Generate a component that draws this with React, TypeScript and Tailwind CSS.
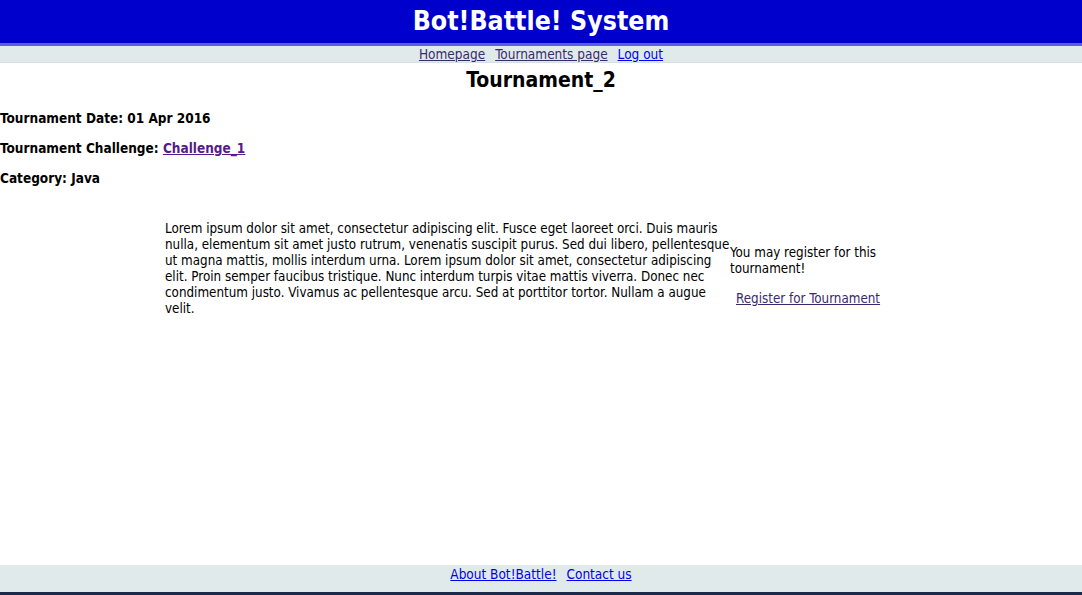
export default function App() {
  const font = { fontFamily: "'DejaVu Sans Condensed', 'DejaVu Sans', sans-serif" };

  return (
    <div className="flex flex-col min-h-[595px] bg-white text-black" style={font}>
      {/* Banner */}
      <header className="bg-[#0000cc] h-[46px] flex items-center justify-center border-b-[3px] border-[#5c5ce0]">
        <h1 className="text-white font-bold text-[26.5px] leading-none">Bot!Battle! System</h1>
      </header>

      {/* Top nav */}
      <nav className="bg-[#e0eaea] h-[17px] flex items-center justify-center gap-[10px] pt-[2px] text-[13.5px] leading-none border-b border-[#d4e2e2]">
        <a href="#" className="underline text-[#3b2a6b]">Homepage</a>
        <a href="#" className="underline text-[#3b2a6b]">Tournaments page</a>
        <a href="#" className="underline text-[#0000ee]">Log out</a>
      </nav>

      <main className="flex-1 flex flex-col">
        <h2 className="text-center font-bold text-[21px] leading-none mt-[7px]">Tournament_2</h2>

        <div className="flex flex-col gap-[16px] mt-[20px] text-[13.5px] font-bold leading-[14px]">
          <p>Tournament Date: 01 Apr 2016</p>
          <p>
            Tournament Challenge: <a href="#" className="underline text-[#551a8b]">Challenge_1</a>
          </p>
          <p>Category: Java</p>
        </div>

        <div className="flex items-center mt-[36px] ml-[165px] text-[13.3px] leading-[16px]">
          <p className="w-[565px] shrink-0">
            Lorem ipsum dolor sit amet, consectetur adipiscing elit. Fusce eget laoreet orci. Duis mauris nulla,
            elementum sit amet justo rutrum, venenatis suscipit purus. Sed dui libero, pellentesque ut magna mattis,
            mollis interdum urna. Lorem ipsum dolor sit amet, consectetur adipiscing elit. Proin semper faucibus
            tristique. Nunc interdum turpis vitae mattis viverra. Donec nec condimentum justo. Vivamus ac pellentesque
            arcu. Sed at porttitor tortor. Nullam a augue velit.
          </p>
          <div className="w-[165px] flex flex-col mt-[14px]">
            <p>You may register for this tournament!</p>
            <a href="#" className="underline text-[#3b2a6b] mt-[14px] ml-[6px]">Register for Tournament</a>
          </div>
        </div>
      </main>

      {/* Footer */}
      <footer className="bg-[#e0eaea] h-[30px] flex items-start justify-center gap-[10px] pt-[2px] text-[13.5px] leading-[14px] border-b-[3px] border-[#1b2a4a]">
        <a href="#" className="underline text-[#0000ee]">About Bot!Battle!</a>
        <a href="#" className="underline text-[#0000ee]">Contact us</a>
      </footer>
    </div>
  );
}
